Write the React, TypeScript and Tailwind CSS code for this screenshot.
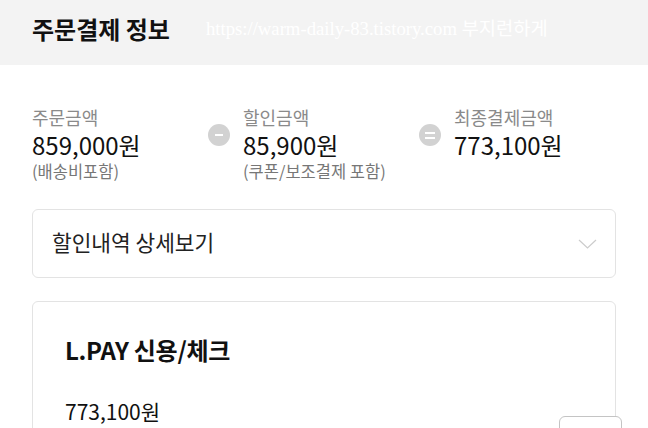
import React from "react";

const summary = [
  { label: "주문금액", amount: "859,000원", note: "(배송비포함)" },
  { label: "할인금액", amount: "85,900원", note: "(쿠폰/보조결제 포함)" },
  { label: "최종결제금액", amount: "773,100원", note: "" },
];

const OpCircle = ({ kind }: { kind: "minus" | "equal" }) => (
  <div className="w-[22px] h-[22px] mt-[20px] mr-[13px] shrink-0 rounded-full bg-[#d2d2d2] flex flex-col items-center justify-center gap-[3px]">
    {kind === "minus" ? (
      <span className="block w-[8px] h-[2px] bg-white" />
    ) : (
      <>
        <span className="block w-[10px] h-[2px] bg-white" />
        <span className="block w-[10px] h-[2px] bg-white" />
      </>
    )}
  </div>
);

export default function App() {
  return (
    <div className="w-[648px] h-[428px] overflow-hidden bg-white text-[#111] font-['Noto_Sans_CJK_KR','Noto_Sans',sans-serif]">
      {/* 헤더 */}
      <header className="h-[65px] bg-[#f3f3f3] flex items-center px-8 pb-[7px]">
        <h1 className="text-[24px] font-bold leading-[30px] text-[#111]">주문결제 정보</h1>
        <span className="ml-[36px] text-[18.7px] leading-[24px] text-white font-['Liberation_Serif','Noto_Sans_CJK_KR',serif]">
          https://warm-daily-83.tistory.com 부지런하게
        </span>
      </header>

      <main className="px-8 pt-[39px]">
        {/* 금액 요약 */}
        <div className="flex items-start">
          {summary.map((s, i) => (
            <React.Fragment key={s.label}>
              <div className="w-[176px] shrink-0 flex flex-col">
                <span className="text-[18px] leading-[26px] text-[#8a8a8a]">{s.label}</span>
                <span className="text-[24px] leading-[30px] text-[#111]">{s.amount}</span>
                {s.note && <span className="text-[16.5px] leading-[23px] text-[#777]">{s.note}</span>}
              </div>
              {i === 0 && <OpCircle kind="minus" />}
              {i === 1 && <OpCircle kind="equal" />}
            </React.Fragment>
          ))}
        </div>

        {/* 할인내역 */}
        <button className="mt-[26px] w-full h-[69px] border border-[#e3e3e3] rounded-md flex items-center justify-between pl-[19px] pr-[18px] pb-[3px]">
          <span className="text-[21.4px] leading-[28px] text-[#222]">할인내역 상세보기</span>
          <svg width="19" height="10" viewBox="0 0 19 10" fill="none" className="mt-[3px]">
            <polyline points="1,1 9.5,9 18,1" stroke="#cccccc" strokeWidth="1.2" />
          </svg>
        </button>

        {/* 결제수단 */}
        <section className="mt-[23px] border border-[#e3e3e3] rounded-md px-8 pt-[33px] pb-8">
          <h2 className="text-[24px] font-bold leading-[30px] tracking-[-0.3px]">L.PAY 신용/체크</h2>
          <div className="mt-[32px] flex items-start justify-between">
            <span className="text-[21px] leading-[28px] text-[#111]">773,100원</span>
            <span className="mt-[19px] mr-[-39px] w-[63px] h-[40px] border border-[#c4c4c4] rounded-md bg-white" />
          </div>
        </section>
      </main>
    </div>
  );
}
